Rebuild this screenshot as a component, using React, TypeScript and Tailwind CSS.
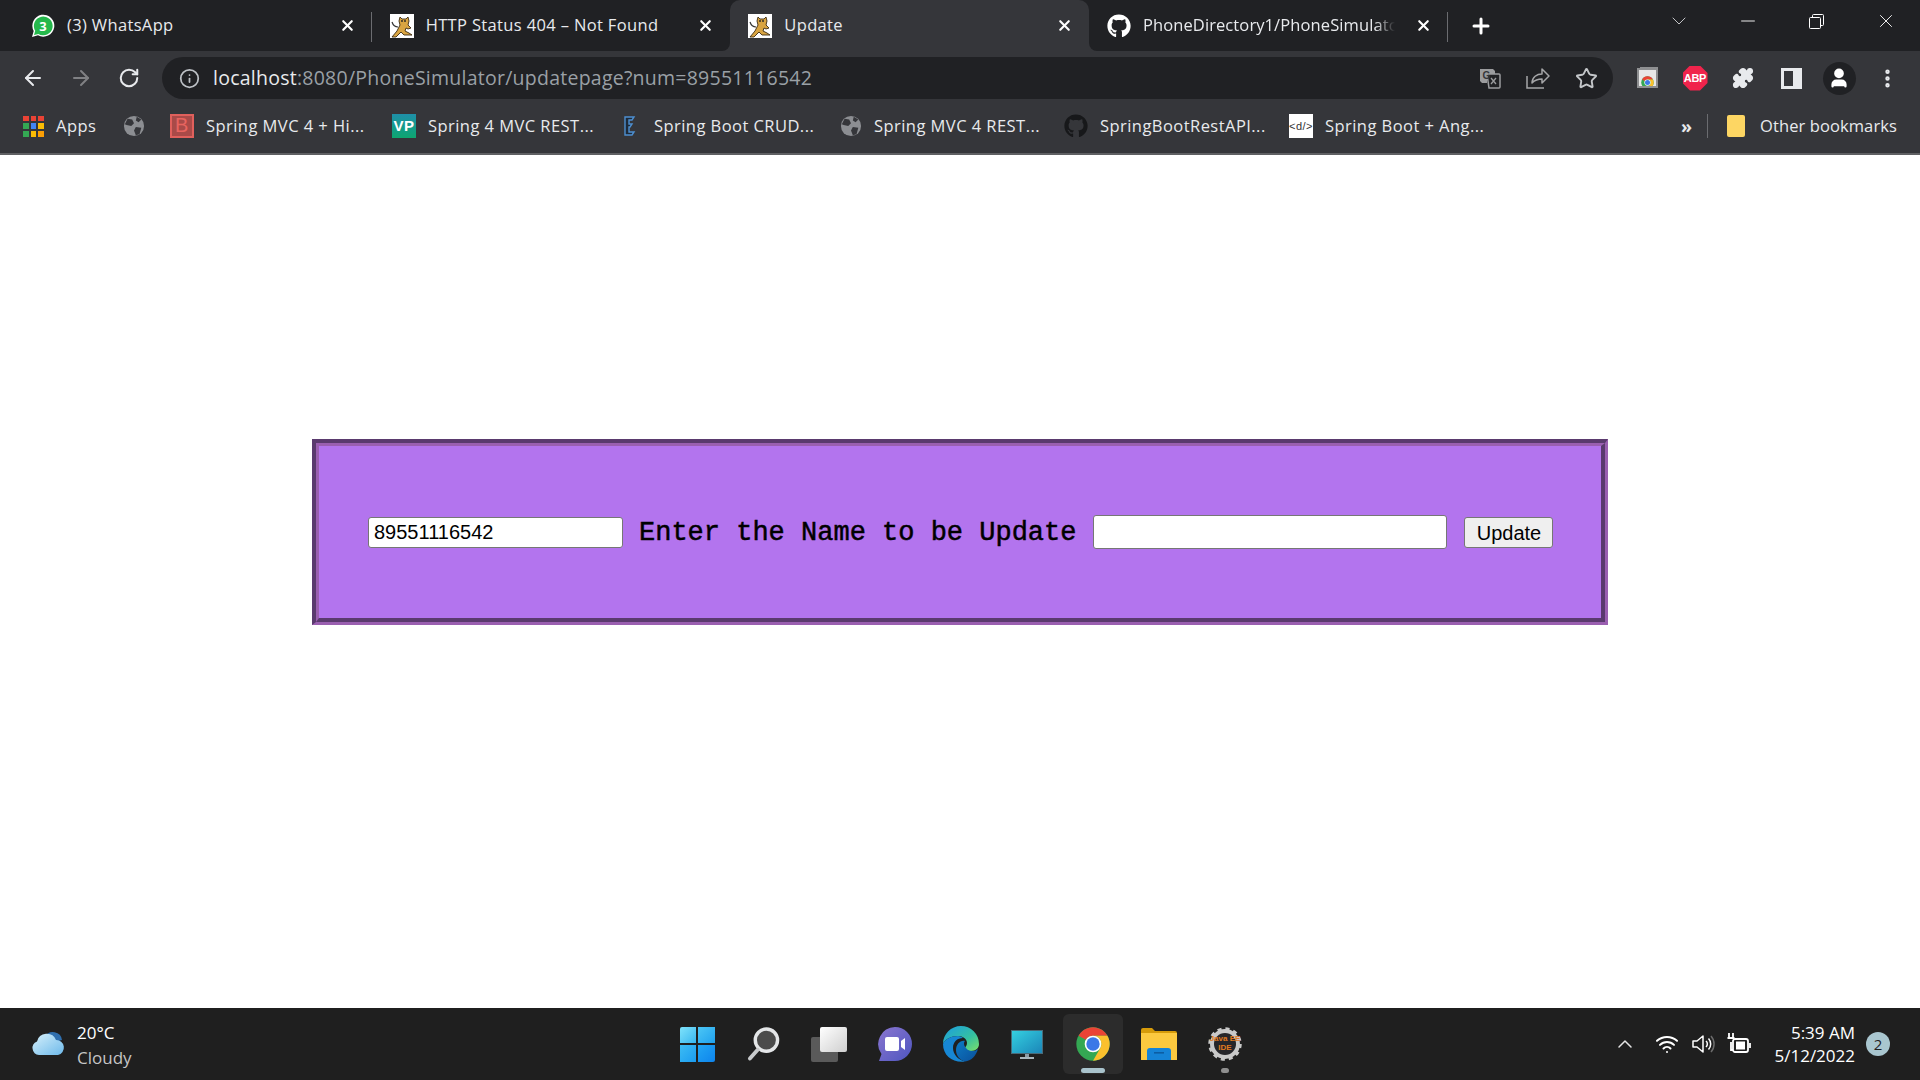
import React from "react";
import { X, Plus, ChevronDown, Minus, ArrowLeft, ArrowRight, RotateCw, Info, Star, ChevronUp, Wifi, Puzzle, EllipsisVertical, User } from "lucide-react";
import { FaGithub } from "react-icons/fa";

const uiFont = "font-['Open_Sans',sans-serif]";

const Tomcat = () => (
	<svg viewBox="0 0 24 24" className="w-6 h-6 shrink-0">
		<rect width="24" height="24" fill="#fff" />
		<path d="M2 23l5-6 3-6-1-4 1-4 2 2h4l2-2 1 4-1 4 3 3-3 1-2-1-1 3 4 2 3 2H14l-3-3-5 5z" fill="#d9a441" stroke="#3b2a12" strokeWidth="0.9" />
		<path d="M2 8c1 3 3 5 6 5" fill="none" stroke="#333" strokeWidth="1.2" />
		<circle cx="12" cy="7" r="0.9" fill="#222" />
		<circle cx="15" cy="7" r="0.9" fill="#222" />
	</svg>
);

const WhatsApp = () => (
	<svg viewBox="0 0 24 24" className="w-6 h-6 shrink-0">
		<path d="M1 23l1.7-6A11 11 0 1 1 7 21.3z" fill="#fff" />
		<path d="M3 21l1.2-4.2A9.400 9.400 0 1 1 7.400 20z" fill="#25b84c" />
		<text x="12" y="16.500" textAnchor="middle" fontSize="13" fontWeight="700" fill="#fff" fontFamily="Open Sans, sans-serif">3</text>
	</svg>
);

const Globe = () => (
	<svg viewBox="0 0 24 24" className="w-[22px] h-[22px] shrink-0">
		<circle cx="12" cy="12" r="11" fill="#8c8e92" />
		<path d="M5 4l5 1 2 4-3 3-5-1-2-1zM14 13l6 1-2 7-4 1-2-5zM15 2l5 3-3 3-3-2z" fill="#35363a" />
	</svg>
);

const ChromeLogo = ({ className }: { className: string }) => (
	<svg viewBox="0 0 48 48" className={className}>
		<circle cx="24" cy="24" r="20" fill="#34a853" />
		<path d="M6.680 14A20 20 0 0 1 41.320 14H24A10 10 0 0 0 15.340 19Z" fill="#ea4335" />
		<path d="M41.320 14A20 20 0 0 1 24 44L32.660 29A10 10 0 0 0 24 14Z" fill="#fbc02d" />
		<circle cx="24" cy="24" r="10" fill="#fff" />
		<circle cx="24" cy="24" r="8" fill="#3b78e7" />
	</svg>
);

const bookmarks = [
	{ label: "Spring MVC 4 + Hi...", width: "w-[222px]", icon: <span className="w-6 h-6 shrink-0 border-2 border-[#e0605c] bg-[#a94a48] text-[#e8645f] text-[20px] leading-[19px] text-center font-['Liberation_Sans',sans-serif]">B</span> },
	{ label: "Spring 4 MVC REST...", width: "w-[226px]", icon: <span className="w-6 h-6 shrink-0 bg-gradient-to-b from-[#1f8fa8] to-[#0fa66f] text-white text-[15px] leading-6 font-bold text-center font-['Liberation_Sans',sans-serif]">VP</span> },
	{ label: "Spring Boot CRUD...", width: "w-[222px]", icon: (
		<svg viewBox="0 0 24 24" className="w-6 h-6 shrink-0">
			<path d="M7 3h9l-2 3h-3v4h3l-2 3h-1v5h5l-2 3H7z" fill="#1d2b3a" stroke="#4d8fd0" strokeWidth="1.4" />
		</svg>
	) },
	{ label: "Spring MVC 4 REST...", width: "w-[224px]", icon: <Globe /> },
	{ label: "SpringBootRestAPI...", width: "w-[225px]", icon: <FaGithub className="w-6 h-6 shrink-0 text-[#17181a]" /> },
	{ label: "Spring Boot + Ang...", width: "w-[392px]", icon: <span className="w-6 h-6 shrink-0 bg-white text-[#333] text-[11px] leading-6 text-center font-['Liberation_Sans',sans-serif]">&lt;d/&gt;</span> },
];

interface TabProps {
	icon: React.ReactNode;
	title: string;
	active?: boolean;
	separator?: boolean;
	fade?: boolean;
}

const Tab = ({ icon, title, active, separator, fade }: TabProps) => {
	return (
		<div className={`relative flex items-center w-[358.67px] h-[51px] pl-[18px] pr-4 gap-3 ${active ? "bg-[#35363a] rounded-t-[10px]" : ""}`}>
			{icon}
			<span className={`flex-1 min-w-0 whitespace-nowrap overflow-hidden text-[16.5px] text-[#e8eaed] ${fade ? "tracking-[0.1px] [mask-image:linear-gradient(to_right,black_92%,transparent)]" : "tracking-[0.35px]"}`}>{title}</span>
			<X size={17} strokeWidth={3} className="text-white shrink-0 ml-2" />
			{separator && <span className="absolute right-0 top-3 h-[30px] w-px bg-[#6b6c70]" />}
			{active && (
				<>
					<span className="absolute -left-2 bottom-0 w-2 h-2 bg-[#35363a]"><span className="block w-2 h-2 bg-[#202124] rounded-br-lg" /></span>
					<span className="absolute -right-2 bottom-0 w-2 h-2 bg-[#35363a]"><span className="block w-2 h-2 bg-[#202124] rounded-bl-lg" /></span>
				</>
			)}
		</div>
	);
};

const TabStrip = () => {
	return (
		<div className="flex items-start h-[51px] pl-[13px] bg-[#202124]">
			<Tab icon={<WhatsApp />} title="(3) WhatsApp" separator />
			<Tab icon={<Tomcat />} title="HTTP Status 404 – Not Found" />
			<Tab icon={<Tomcat />} title="Update" active />
			<Tab icon={<FaGithub className="w-6 h-6 shrink-0 text-white" />} title="PhoneDirectory1/PhoneSimulator" separator fade />
			<div className="flex items-center justify-center w-[66px] h-[51px]">
				<Plus size={24} strokeWidth={3} className="text-white" />
			</div>
			<div className="flex-1" />
			<div className="flex items-center justify-center w-[69px] h-[42px]"><ChevronDown size={24} strokeWidth={1} className="text-[#c4c5c7]" /></div>
			<div className="flex items-center justify-center w-[69px] h-[42px]"><Minus size={22} strokeWidth={1} className="text-white" /></div>
			<div className="flex items-center justify-center w-[69px] h-[42px]">
				<svg viewBox="0 0 15 15" className="w-[15px] h-[15px]" fill="none" stroke="#fff" strokeWidth="1">
					<rect x="0.500" y="3.500" width="11" height="11" rx="1" />
					<path d="M3.500 3V1.500a1 1 0 0 1 1-1h9a1 1 0 0 1 1 1v9a1 1 0 0 1-1 1H12" />
				</svg>
			</div>
			<div className="flex items-center justify-center w-[69px] h-[42px]"><X size={22} strokeWidth={1} className="text-white" /></div>
		</div>
	);
};

const ToolCell = ({ children }: { children: React.ReactNode }) => (
	<div className="flex items-center justify-center w-12 h-[42px] shrink-0">{children}</div>
);

const Toolbar = () => {
	return (
		<div className="flex items-center h-[54px] pl-[9px] pr-[9px] bg-[#35363a]">
			<ToolCell><ArrowLeft size={24} strokeWidth={2} className="text-[#e8eaed]" /></ToolCell>
			<ToolCell><ArrowRight size={24} strokeWidth={2} className="text-[#808184]" /></ToolCell>
			<ToolCell><RotateCw size={22} strokeWidth={2.2} className="text-[#e8eaed]" /></ToolCell>
			<div className="flex items-center flex-1 h-[42px] ml-[9px] mr-[10px] pl-[17px] pr-[3px] rounded-full bg-[#202124]">
				<Info size={21} strokeWidth={2} className="text-[#bdc1c6] shrink-0" />
				<div className="ml-[13px] flex-1 text-[19.5px] tracking-[0.25px] whitespace-nowrap text-[#9aa0a6]">
					<span className="text-[#e8eaed]">localhost</span>:8080/PhoneSimulator/updatepage?num=89551116542
				</div>
				<ToolCell>
					<svg viewBox="0 0 24 24" className="w-6 h-6">
						<path d="M2 3h13l2 2v3H9v9H4l-2-2z" fill="#9b9c9e" />
						<path d="M9 8h12a1 1 0 0 1 1 1v12a1 1 0 0 1-1 1H11z" fill="none" stroke="#9b9c9e" strokeWidth="1.5" />
						<path d="M13 12l5 6M18 12l-5 6" stroke="#9b9c9e" strokeWidth="1.3" />
						<text x="8.500" y="12.500" textAnchor="middle" fontSize="10" fontWeight="700" fill="#35363a" fontFamily="Liberation Sans, sans-serif">G</text>
					</svg>
				</ToolCell>
				<ToolCell>
					<svg viewBox="0 0 24 24" className="w-6 h-6" fill="none" stroke="#a5a6a8" strokeWidth="1.5">
						<path d="M1 10v12h17" />
						<path d="M6 17c0-6 5-9 10-9V3l7 7-7 7v-4c-4 0-7 1-10 4z" strokeLinejoin="round" />
					</svg>
				</ToolCell>
				<ToolCell><Star size={23} strokeWidth={2} className="text-[#c4c7ca]" /></ToolCell>
			</div>
			<ToolCell>
				<div className="relative w-[21px] h-[20px] bg-[#bcbdbf] rounded-[2px]">
					<span className="absolute -top-[1px] right-0 w-[18px] h-[3px] border-t border-r border-[#8f9092]" />
					<div className="flex items-end justify-center h-full overflow-hidden bg-[#e8e8e8] border-2 border-[#8e8f91]">
						<ChromeLogo className="w-[15px] h-[15px] -mb-[4px] shrink-0" />
					</div>
				</div>
			</ToolCell>
			<ToolCell>
				<div className="flex items-center justify-center w-[25px] h-[25px] bg-[#f0244c] [clip-path:polygon(30%_0,70%_0,100%_30%,100%_70%,70%_100%,30%_100%,0_70%,0_30%)]">
					<span className="text-white text-[11px] font-bold font-['Liberation_Sans',sans-serif] tracking-[-0.3px]">ABP</span>
				</div>
			</ToolCell>
			<ToolCell><Puzzle size={22} strokeWidth={2} className="text-[#e8eaed] fill-[#e8eaed]" /></ToolCell>
			<ToolCell>
				<div className="flex justify-start w-[21px] h-[21px] bg-[#e8eaed] p-[3px]">
					<span className="w-[9px] h-full bg-[#35363a]" />
				</div>
			</ToolCell>
			<ToolCell>
				<div className="flex items-center justify-center w-[33px] h-[33px] rounded-full bg-[#202124]">
					<User size={22} strokeWidth={2.6} className="text-white fill-white" />
				</div>
			</ToolCell>
			<ToolCell><EllipsisVertical size={23} strokeWidth={2.6} className="text-[#e8eaed]" /></ToolCell>
		</div>
	);
};

const BookmarkBar = () => {
	return (
		<div className={`flex items-center h-[50px] pb-[6px] pl-[23px] bg-[#35363a] border-b-2 border-[#5f6063] text-[16.5px] tracking-[0.45px] text-[#e8eaed] ${uiFont}`}>
			<div className="flex items-center gap-3 w-[100px] shrink-0">
				<div className="grid grid-cols-3 gap-[2px] w-[21px] h-[21px] shrink-0">
					<span className="bg-[#ea4335]" /><span className="bg-[#ea4335]" /><span className="bg-[#ea4335]" />
					<span className="bg-[#34a853]" /><span className="bg-[#4285f4]" /><span className="bg-[#fbbc05]" />
					<span className="bg-[#34a853]" /><span className="bg-[#fbbc05]" /><span className="bg-[#fb9f05]" />
				</div>
				<span>Apps</span>
			</div>
			<div className="w-[47px] shrink-0"><Globe /></div>
			{bookmarks.map((b) => (
				<div key={b.label} className={`flex items-center gap-3 shrink-0 ${b.width}`}>
					{b.icon}
					<span className="whitespace-nowrap">{b.label}</span>
				</div>
			))}
			<span className="w-[26px] shrink-0 font-bold text-[18px]">»</span>
			<span className="w-px h-[24px] bg-[#6b6c70] shrink-0 mr-[19px]" />
			<div className="w-[18px] h-[22px] bg-[#fdd663] rounded-[2px] shrink-0 mr-[15px]" />
			<span className="whitespace-nowrap tracking-[0.1px]">Other bookmarks</span>
		</div>
	);
};

const UpdateForm = () => {
	return (
		<main className="flex-1 bg-white pt-[284px]">
			<div className="w-[1296px] h-[186px] mx-auto border-t-4 border-l-4 border-r-[3px] border-b-[3px] border-t-[#5a3a6e] border-l-[#5a3a6e] border-r-[#9a5fb0] border-b-[#9a5fb0]">
				<form className="flex items-center h-full pl-[49px] bg-[#b374ee] border-t-[3px] border-l-[3px] border-r-4 border-b-4 border-t-[#9a5fb0] border-l-[#9a5fb0] border-r-[#5a3a6e] border-b-[#5a3a6e] font-['Liberation_Sans',sans-serif]">
					<input
						readOnly
						value="89551116542"
						className="w-[255px] h-[31px] px-[5px] bg-white border border-[#767676] rounded-[3px] text-[20px] text-black"
					/>
					<label className="ml-4 pt-[2px] whitespace-nowrap font-['Liberation_Mono',monospace] [-webkit-text-stroke:0.5px_black] text-[27px] text-black">Enter the Name to be Update</label>
					<input readOnly className="w-[354px] h-[34px] ml-[17px] bg-white border border-[#767676] rounded-[3px]" />
					<button type="button" className="w-[89px] h-[31px] ml-[17px] bg-[#efefef] border border-[#767676] rounded-[3px] text-[20px] text-black">Update</button>
				</form>
			</div>
		</main>
	);
};

const TaskIcon = ({ children, active, dot }: { children: React.ReactNode; active?: boolean; dot?: string }) => (
	<div className={`relative flex items-center justify-center w-[60px] h-[60px] mx-[3px] rounded-md ${active ? "bg-[#2c2c2c]" : ""}`}>
		{children}
		{dot && <span className={`absolute bottom-[1px] h-[5px] rounded-full ${dot}`} />}
	</div>
);

const Taskbar = () => {
	return (
		<footer className={`grid grid-cols-[1fr_auto_1fr] items-center h-[72px] bg-[#1f1f1f] text-white ${uiFont}`}>
			<div className="flex items-center pl-[31px]">
				<svg viewBox="0 0 34 26" className="w-[34px] h-[26px]">
					<defs>
						<linearGradient id="cloud" x1="0" y1="0" x2="1" y2="1">
							<stop offset="0" stopColor="#d6f0fb" />
							<stop offset="1" stopColor="#6db9ea" />
						</linearGradient>
					</defs>
					<path d="M14 6a9 9 0 0 1 17 3 8 8 0 0 0-6 4z" fill="#2f6fae" />
					<path d="M8 24a7 7 0 0 1-2-13.500A10 10 0 0 1 25 9a7.600 7.600 0 0 1 2 15z" fill="url(#cloud)" />
				</svg>
				<div className="ml-3 pt-[2px] text-[17px] leading-[25px]">
					<div>20°C</div>
					<div className="text-[#c5c5c5]">Cloudy</div>
				</div>
			</div>
			<div className="flex items-center pl-[2px]">
				<TaskIcon>
					<div className="grid grid-cols-2 gap-[2px] w-[35px] h-[35px]">
						<span className="bg-gradient-to-br from-[#7ee3fb] to-[#35b6ee] rounded-tl-[2px]" />
						<span className="bg-gradient-to-br from-[#4bc6f5] to-[#1ea2ee]" />
						<span className="bg-gradient-to-br from-[#3cbcf3] to-[#1a9cf0]" />
						<span className="bg-gradient-to-br from-[#22a6f3] to-[#0f84ec] rounded-br-[2px]" />
					</div>
				</TaskIcon>
				<TaskIcon>
					<svg viewBox="0 0 34 36" className="w-[33px] h-[36px]">
						<circle cx="20" cy="14" r="11.500" fill="#4b4b4b" stroke="#e4e6e8" strokeWidth="3.500" />
						<path d="M11 24l-8 9" stroke="#c8cacc" strokeWidth="4" strokeLinecap="round" />
					</svg>
				</TaskIcon>
				<TaskIcon>
					<div className="relative w-[36px] h-[35px]">
						<span className="absolute left-0 bottom-0 w-[27px] h-[25px] bg-[#5a5a5a] rounded-[2px]" />
						<span className="absolute right-0 top-0 w-[27px] h-[25px] bg-gradient-to-br from-white to-[#cfcfcf] rounded-[2px]" />
					</div>
				</TaskIcon>
				<TaskIcon>
					<svg viewBox="0 0 34 36" className="w-[34px] h-[36px]">
						<defs>
							<linearGradient id="chat" x1="0" y1="0" x2="1" y2="1">
								<stop offset="0" stopColor="#8a75cf" />
								<stop offset="1" stopColor="#4e56c0" />
							</linearGradient>
						</defs>
						<path d="M17 1a17 17 0 0 1 0 34H1l2.500-7A17 17 0 0 1 17 1z" fill="url(#chat)" />
						<rect x="7" y="11" width="14" height="14" rx="2" fill="#fff" />
						<path d="M23 15l4-3v12l-4-3z" fill="#fff" />
					</svg>
				</TaskIcon>
				<TaskIcon>
					<svg viewBox="0 0 36 36" className="w-[36px] h-[36px]">
						<defs>
							<linearGradient id="edge1" x1="0" y1="0" x2="1" y2="1">
								<stop offset="0" stopColor="#1b9de2" />
								<stop offset="0.6" stopColor="#35c1a0" />
								<stop offset="1" stopColor="#7ce06a" />
							</linearGradient>
							<linearGradient id="edge2" x1="0" y1="0" x2="1" y2="1">
								<stop offset="0" stopColor="#0c7ac4" />
								<stop offset="1" stopColor="#0b4f9a" />
							</linearGradient>
						</defs>
						<path d="M18 0a18 18 0 0 1 18 18c0 4-3 7-8 7-4 0-6-2-6-3 0-1 2-2 2-5 0-4-4-7-9-7C8 10 2 13 0 18 0 8 8 0 18 0z" fill="url(#edge1)" />
						<path d="M0 18c2-5 8-8 15-8 2 0 4 1 5 2-6 0-10 4-10 10 0 6 5 12 12 13.500C10 37 0 30 0 18z" fill="#1787d4" />
						<path d="M13 24c0-5 4-10 9-9-2 2-1 6 3 9 4 2 8 1 10-1-2 7-7 12-13 12.500-5-1-9-6-9-11.500z" fill="url(#edge2)" />
					</svg>
				</TaskIcon>
				<TaskIcon>
					<div className="flex flex-col items-center w-[32px]">
						<span className="w-[32px] h-[24px] bg-gradient-to-br from-[#35d0e0] to-[#1c86b8] border border-[#4a6a78]" />
						<span className="w-[4px] h-[3px] bg-[#8a9aa4]" />
						<span className="w-[14px] h-[2px] bg-[#a9b6bd]" />
					</div>
				</TaskIcon>
				<TaskIcon active dot="w-6 bg-[#a9c3cc]">
					<ChromeLogo className="w-[40px] h-[40px]" />
				</TaskIcon>
				<TaskIcon>
					<svg viewBox="0 0 36 32" className="w-[36px] h-[32px]">
						<path d="M0 2a2 2 0 0 1 2-2h9l3 3h20a2 2 0 0 1 2 2v5H0z" fill="#d69b0a" />
						<path d="M0 5h36v27H0z" fill="#fcc93f" />
						<path d="M6 32V23a3 3 0 0 1 3-3h18a3 3 0 0 1 3 3v9z" fill="#1583d6" />
						<rect x="13" y="24" width="10" height="1.600" fill="#0c5da3" />
					</svg>
				</TaskIcon>
				<TaskIcon dot="w-2 bg-[#8f8f8f]">
					<svg viewBox="0 0 34 34" className="w-[34px] h-[34px]">
						<circle cx="17" cy="17" r="12.500" fill="none" stroke="#c9c9c9" strokeWidth="5" />
						<circle cx="17" cy="17" r="15" fill="none" stroke="#c9c9c9" strokeWidth="3.500" strokeDasharray="4 3.850" />
						<circle cx="17" cy="17" r="11" fill="#26262a" />
						<text x="17" y="14" textAnchor="middle" fontSize="8" fontWeight="700" fill="#e07a1f" fontFamily="Liberation Sans, sans-serif">Java EE</text>
						<text x="17" y="23" textAnchor="middle" fontSize="8" fontWeight="700" fill="#e07a1f" fontFamily="Liberation Sans, sans-serif">IDE</text>
					</svg>
				</TaskIcon>
			</div>
			<div className="flex items-center justify-end pr-[30px]">
				<ChevronUp size={24} strokeWidth={1.5} className="text-[#e5e5e5] mr-[18px]" />
				<Wifi size={24} strokeWidth={2} className="text-white mr-3" />
				<svg viewBox="0 0 24 24" className="w-6 h-6 mr-3" fill="none" stroke="#fff" strokeWidth="1.500">
					<path d="M2 9v6h4l6 5V4L6 9z" strokeLinejoin="round" />
					<path d="M15 9a4 4 0 0 1 0 6M17.500 6.500a8 8 0 0 1 0 11" />
					<path d="M20 4a12 12 0 0 1 0 16" stroke="#6b6b6b" />
				</svg>
				<svg viewBox="0 0 24 24" className="w-6 h-6 mr-[23px]" fill="none" stroke="#fff" strokeWidth="1.800">
					<path d="M2 1v5M6 1v5M0.500 6h7M4 10v8h2" />
					<rect x="6" y="7" width="15" height="13" rx="2" />
					<rect x="9" y="9.500" width="9" height="8" fill="#fff" stroke="none" />
					<path d="M23 11v5" />
				</svg>
				<div className="text-right text-[17px] leading-[23px] whitespace-nowrap">
					<div>5:39 AM</div>
					<div>5/12/2022</div>
				</div>
				<span className="flex items-center justify-center w-6 h-6 ml-[11px] rounded-full bg-[#a9c6cf] text-[#1f1f1f] text-[15px]">2</span>
			</div>
		</footer>
	);
};

export default function App() {
	return (
		<div className={`flex flex-col w-[1920px] h-[1080px] overflow-hidden ${uiFont}`}>
			<TabStrip />
			<Toolbar />
			<BookmarkBar />
			<UpdateForm />
			<Taskbar />
		</div>
	);
}
